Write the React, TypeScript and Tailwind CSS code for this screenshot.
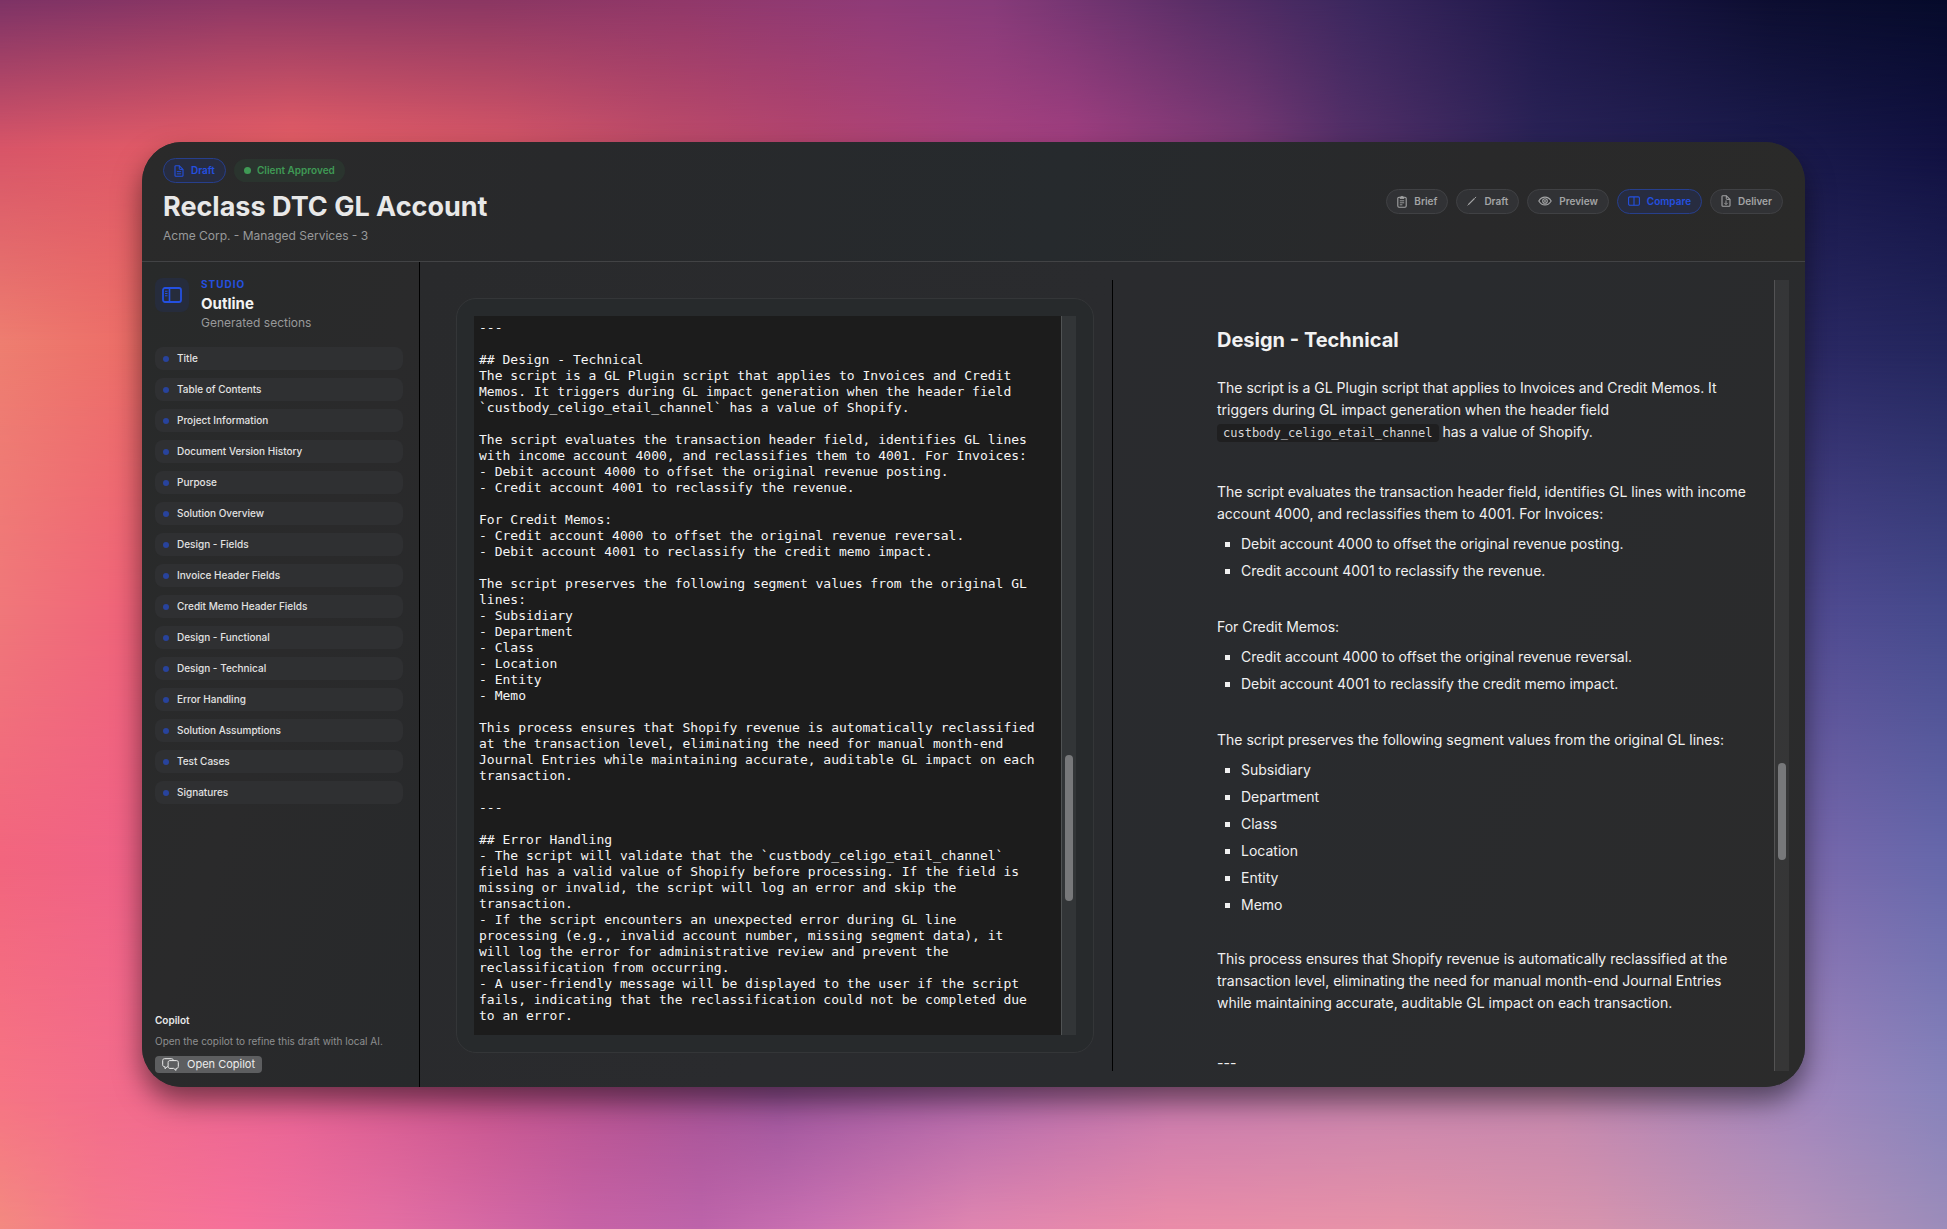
import React, { useState } from 'react';
import clsx from 'clsx';

type IconProps = { className?: string };

const DocIcon = ({ className }: IconProps) => (
  <svg className={className} width="10" height="12" viewBox="0 0 10 12" fill="none" stroke="currentColor">
    <path d="M1 1.6C1 1 1.3.7 1.9.7h3.4L9 4.4v6c0 .6-.3.9-.9.9H1.9c-.6 0-.9-.3-.9-.9z" strokeWidth="1.1" />
    <path d="M5.3.8v2.9c0 .5.2.7.7.7h2.9" strokeWidth="1" />
    <path d="M2.8 6.6h4.4M2.8 8.8h4.4" strokeWidth=".9" />
  </svg>
);

const ClipboardIcon = ({ className }: IconProps) => (
  <svg className={className} width="10" height="13" viewBox="0 0 10 13" fill="none" stroke="currentColor">
    <rect x=".8" y="2.2" width="8.4" height="10" rx="1.2" strokeWidth="1.1" />
    <path d="M3 3.4V2.2h1.1a.9.9 0 0 1 1.8 0H7v1.2z" fill="currentColor" strokeWidth=".8" />
    <path d="M2.8 5.8h4.4M2.8 7.8h4.4M2.8 9.8h2.6" strokeWidth=".9" />
  </svg>
);

const PencilIcon = ({ className }: IconProps) => (
  <svg className={className} width="10" height="10" viewBox="0 0 10 10" fill="none" stroke="currentColor">
    <path d="M1.6 8.4 7.6 2.4" strokeWidth="1.3" />
    <path d="m8.1 1.9.7-.7M.9 9.1l.7-.7" strokeWidth="1" strokeLinecap="round" />
  </svg>
);

const EyeIcon = ({ className }: IconProps) => (
  <svg className={className} width="14" height="10" viewBox="0 0 14 10" fill="none" stroke="currentColor">
    <path d="M.8 5C2.2 2.6 4.4 1.1 7 1.1S11.8 2.6 13.2 5C11.8 7.4 9.6 8.9 7 8.9S2.2 7.4.8 5z" strokeWidth="1.1" />
    <circle cx="7" cy="5" r="2.3" strokeWidth="1.1" />
    <circle cx="7" cy="5" r=".9" fill="currentColor" stroke="none" />
  </svg>
);

const SplitIcon = ({ className }: IconProps) => (
  <svg className={className} width="12" height="10" viewBox="0 0 12 10" fill="none" stroke="currentColor">
    <rect x=".6" y=".9" width="10.8" height="8.4" rx="1.2" strokeWidth="1.1" />
    <path d="M6 1v8.2" strokeWidth="1.1" />
  </svg>
);

const DeliverIcon = ({ className }: IconProps) => (
  <svg className={className} width="10" height="12" viewBox="0 0 10 12" fill="none" stroke="currentColor">
    <path d="M1 1.6C1 1 1.3.7 1.9.7h3.4L9 4.4v6c0 .6-.3.9-.9.9H1.9c-.6 0-.9-.3-.9-.9z" strokeWidth="1.1" />
    <path d="M5.3.8v2.9c0 .5.2.7.7.7h2.9" strokeWidth="1" />
    <path d="M5 5.4v4M3.3 7.9 5 9.6l1.7-1.7" strokeWidth=".9" />
  </svg>
);

const SidebarIcon = ({ className }: IconProps) => (
  <svg className={className} width="20" height="16" viewBox="0 0 20 16" fill="none" stroke="currentColor">
    <rect x="1" y="1" width="18" height="14" rx="2" strokeWidth="1.8" />
    <path d="M7.5 1v14" strokeWidth="1.6" />
    <path d="M3 4.2h2.5M3 6.5h2.5M3 8.8h2.5" strokeWidth="1.1" />
  </svg>
);

const BubblesIcon = ({ className }: IconProps) => (
  <svg className={className} width="17" height="13" viewBox="0 0 17 13" fill="none" stroke="currentColor" strokeLinejoin="round">
    <path d="M6 8.7h-.8l-2.2 2v-2h-.4C1.4 8.7.7 8 .7 6.8V2.6C.7 1.4 1.4.7 2.6.7h6.8c1.2 0 1.900.7 1.900 1.900" />
    <path d="M8 2.6h6.4c1.2 0 1.9.7 1.9 1.9v4c0 1.2-.7 1.9-1.9 1.9H14v2l-2.3-2H8c-1.2 0-1.9-.7-1.9-1.9v-4c0-1.2.7-1.9 1.9-1.9z" />
  </svg>
);

const MODES = [
  { id: 'brief', label: 'Brief', icon: ClipboardIcon },
  { id: 'draft', label: 'Draft', icon: PencilIcon },
  { id: 'preview', label: 'Preview', icon: EyeIcon },
  { id: 'compare', label: 'Compare', icon: SplitIcon },
  { id: 'deliver', label: 'Deliver', icon: DeliverIcon },
];

const SECTIONS = [
  'Title',
  'Table of Contents',
  'Project Information',
  'Document Version History',
  'Purpose',
  'Solution Overview',
  'Design - Fields',
  'Invoice Header Fields',
  'Credit Memo Header Fields',
  'Design - Functional',
  'Design - Technical',
  'Error Handling',
  'Solution Assumptions',
  'Test Cases',
  'Signatures',
];

const SOURCE = `---

## Design - Technical
The script is a GL Plugin script that applies to Invoices and Credit
Memos. It triggers during GL impact generation when the header field
\`custbody_celigo_etail_channel\` has a value of Shopify.

The script evaluates the transaction header field, identifies GL lines
with income account 4000, and reclassifies them to 4001. For Invoices:
- Debit account 4000 to offset the original revenue posting.
- Credit account 4001 to reclassify the revenue.

For Credit Memos:
- Credit account 4000 to offset the original revenue reversal.
- Debit account 4001 to reclassify the credit memo impact.

The script preserves the following segment values from the original GL
lines:
- Subsidiary
- Department
- Class
- Location
- Entity
- Memo

This process ensures that Shopify revenue is automatically reclassified
at the transaction level, eliminating the need for manual month-end
Journal Entries while maintaining accurate, auditable GL impact on each
transaction.

---

## Error Handling
- The script will validate that the \`custbody_celigo_etail_channel\`
field has a valid value of Shopify before processing. If the field is
missing or invalid, the script will log an error and skip the
transaction.
- If the script encounters an unexpected error during GL line
processing (e.g., invalid account number, missing segment data), it
will log the error for administrative review and prevent the
reclassification from occurring.
- A user-friendly message will be displayed to the user if the script
fails, indicating that the reclassification could not be completed due
to an error.`;

// Each layer fades in over the one before, so the colours blend down the page
const Wallpaper = () => (
  <div className="absolute inset-0 -z-10" aria-hidden="true">
    <div className="absolute inset-0 bg-[linear-gradient(to_right,#7d3366,#8d3765_12%,#8b3763_25%,#91386a_35%,#8f3b78_45%,#873b7a_51%,#5c2f68_61%,#3a275e_70%,#1d1748_80%,#0d0e31_91%,#060b2b)]" />
    <div className="absolute inset-0 bg-[linear-gradient(to_right,#d85568,#e85f66_15%,#d65667_26%,#c04c69_34%,#b5456e_41%,#a8427d_50%,#a23f80_55%,#793974_64%,#563069_69%,#2a2357_79%,#1b1b4c_90%,#111141)] [mask-image:linear-gradient(to_bottom,transparent,black_12%)]" />
    <div className="absolute inset-0 bg-[linear-gradient(to_right,#ee7e70,#ec6a66_8%,#a23f80_50%,#2a2863_93%,#22255c)] [mask-image:linear-gradient(to_bottom,transparent_12%,black_28%)]" />
    <div className="absolute inset-0 bg-[linear-gradient(to_right,#f0777a,#f0627a_7%,#a23f80_50%,#514b92_93%,#454a8c)] [mask-image:linear-gradient(to_bottom,transparent_28%,black_50%)]" />
    <div className="absolute inset-0 bg-[linear-gradient(to_right,#f2657e,#f06288_7%,#a24f90_50%,#7868ac_93%,#6668ab)] [mask-image:linear-gradient(to_bottom,transparent_50%,black_70%)]" />
    <div className="absolute inset-0 bg-[linear-gradient(to_right,#f67484,#f26b8d_7%,#e86394_15%,#c8558e_25%,#b05292_33%,#9c549b_40%,#b168ab_50%,#c87aaf_60%,#c884ae_70%,#c487ae_80%,#9f86bd_93%,#8783bb)] [mask-image:linear-gradient(to_bottom,transparent_70%,black_89%)]" />
    <div className="absolute inset-0 bg-[linear-gradient(to_right,#f38a80,#f5788c_5%,#f6709a_12%,#e46fa3_20%,#c763a6_30%,#bd64aa_36%,#cb72b2_42%,#e086b0_50%,#ea8ca8_60%,#e693a8_72%,#d694ae_82%,#b893ba_92%,#9b8cba)] [mask-image:linear-gradient(to_bottom,transparent_89%,black)]" />
  </div>
);

interface ScrollTrackProps {
  thumbClassName: string;
}

const ScrollTrack: React.FC<ScrollTrackProps> = ({ thumbClassName }) => (
  <div className="relative w-[15px] shrink-0 border-l border-white/15 bg-white/5">
    <div className={clsx('absolute left-[3px] w-2 rounded-full bg-[#77787a]', thumbClassName)} />
  </div>
);

const Bullets = ({ items }: { items: string[] }) => (
  <ul className="mt-2 flex flex-col gap-[5px] pl-2">
    {items.map((item) => (
      <li key={item} className="flex items-center gap-[11px]">
        <span className="size-[5px] bg-[#f0f0f0]" />
        {item}
      </li>
    ))}
  </ul>
);

const Header = () => {
  const [mode, setMode] = useState('compare');

  return (
    <header className="flex items-center justify-between border-b border-[#424345] bg-[linear-gradient(100deg,#2a2a2a,#28292b_25%,#262a2d_55%,#29292a_80%,#2a2a29)] pt-4 pr-[22px] pb-[17px] pl-[21px]">
      <div>
        <div className="flex items-center gap-2">
          <span className="flex h-[25px] items-center gap-[7px] rounded-full border border-[#273f8c] bg-[#272c40] px-[10px] text-[10px] font-semibold text-[#2450e0]">
            <DocIcon />
            Draft
          </span>
          <span className="flex h-[23px] items-center gap-[6px] rounded-full bg-[#2a342e] px-[10px] text-[10px] font-semibold text-[#3f9a55]">
            <span className="size-[7px] rounded-full bg-[#3f9a55]" />
            Client Approved
          </span>
        </div>
        <h1 className="mt-[9px] text-[27px] leading-[30px] font-bold text-[#e8e8e8]">Reclass DTC GL Account</h1>
        <p className="mt-[6px] text-xs leading-4 text-[#98999a]">Acme Corp. - Managed Services - 3</p>
      </div>

      <nav className="flex items-center gap-2">
        {MODES.map(({ id, label, icon: Icon }) => (
          <button
            key={id}
            type="button"
            onClick={() => setMode(id)}
            aria-pressed={mode === id}
            className={clsx(
              'flex h-[25px] items-center gap-[7px] rounded-full border px-[10px] text-[10px] font-semibold',
              mode === id
                ? 'border-[#273f8c] bg-[#272c40] text-[#2450e0]'
                : 'border-[#404144] bg-[#313235] text-[#a3a4a5]',
            )}
          >
            <Icon />
            {label}
          </button>
        ))}
      </nav>
    </header>
  );
};

const Sidebar = () => (
  <aside className="flex w-[278px] shrink-0 flex-col border-r border-black bg-[linear-gradient(110deg,#282a2a,#2a2a2b_50%,#27292b)] pt-4 pr-4 pb-[14px] pl-[13px]">
    <div className="flex gap-3">
      <div className="flex size-[34px] items-center justify-center rounded-lg bg-[#262c3c] text-[#2450e0]">
        <SidebarIcon />
      </div>
      <div>
        <p className="text-[10px] leading-3 font-bold tracking-widest text-[#2450e0]">STUDIO</p>
        <h2 className="mt-1 text-[15px] leading-5 font-bold text-[#f2f2f2]">Outline</h2>
        <p className="mt-px text-xs leading-4 text-[#98999a]">Generated sections</p>
      </div>
    </div>

    <ul className="mt-4 flex flex-col gap-2">
      {SECTIONS.map((section) => (
        <li key={section}>
          <button
            type="button"
            className="flex h-[23px] w-full items-center gap-2 rounded-lg bg-[#2f3032] px-2 text-left text-[10px] font-medium text-[#e2e2e2]"
          >
            <span className="size-[6px] rounded-full bg-[#28439c]" />
            {section}
          </button>
        </li>
      ))}
    </ul>

    <div className="mt-auto">
      <h3 className="text-[10px] leading-4 font-semibold text-[#e8e8e8]">Copilot</h3>
      <p className="mt-[5px] text-[10px] leading-4 whitespace-nowrap text-[#8e8f90]">
        Open the copilot to refine this draft with local AI.
      </p>
      <button
        type="button"
        className="mt-[7px] flex h-[17px] items-center gap-2 rounded bg-[#5d5e60] px-[7px] text-[11px] text-[#ececec]"
      >
        <BubblesIcon />
        Open Copilot
      </button>
    </div>
  </aside>
);

const Editor = () => {
  const [source, setSource] = useState(SOURCE);

  return (
    <section className="flex min-h-0 border-r border-black py-[18px] pr-[18px] pl-[19px]">
      <div className="flex flex-1 rounded-[20px] border border-[#343638] bg-[#272a2c] p-[17px]">
        <textarea
          value={source}
          onChange={(e) => setSource(e.target.value)}
          aria-label="Markdown source"
          wrap="off"
          spellCheck={false}
          className="min-w-0 flex-1 resize-none overflow-hidden bg-[#1c1c1c] pt-1 pl-[5px] font-['DejaVu_Sans_Mono',monospace] text-[13px] leading-4 text-[#f5f5f5] outline-none"
        />
        <ScrollTrack thumbClassName="top-[61%] h-[146px]" />
      </div>
    </section>
  );
};

const Preview = () => (
  <section className="flex min-h-0">
    <article className="flex-1 pt-[46px] pr-5 pl-[104px] text-[14px] leading-[22px] text-[#f0f0f0]">
      <h2 className="text-[20px] leading-7 font-bold text-[#f2f2f2]">Design - Technical</h2>
      <p className="mt-[23px]">
        The script is a GL Plugin script that applies to Invoices and Credit Memos. It triggers during GL impact
        generation when the header field{' '}
        <code className="rounded bg-[#1f1f20] px-[6px] py-[2px] font-['DejaVu_Sans_Mono',monospace] text-xs text-[#d8d8d8]">
          custbody_celigo_etail_channel
        </code>{' '}
        has a value of Shopify.
      </p>

      <p className="mt-[38px]">
        The script evaluates the transaction header field, identifies GL lines with income account 4000, and
        reclassifies them to 4001. For Invoices:
      </p>
      <Bullets
        items={[
          'Debit account 4000 to offset the original revenue posting.',
          'Credit account 4001 to reclassify the revenue.',
        ]}
      />

      <p className="mt-[34px]">For Credit Memos:</p>
      <Bullets
        items={[
          'Credit account 4000 to offset the original revenue reversal.',
          'Debit account 4001 to reclassify the credit memo impact.',
        ]}
      />

      <p className="mt-[34px]">The script preserves the following segment values from the original GL lines:</p>
      <Bullets items={['Subsidiary', 'Department', 'Class', 'Location', 'Entity', 'Memo']} />

      <p className="mt-8">
        This process ensures that Shopify revenue is automatically reclassified at the transaction level, eliminating
        the need for manual month-end Journal Entries while maintaining accurate, auditable GL impact on each
        transaction.
      </p>

      <p className="mt-[38px]">---</p>
    </article>
    <ScrollTrack thumbClassName="top-[61%] h-[97px]" />
  </section>
);

export default function App() {
  return (
    <div className="relative isolate flex h-screen min-h-[1100px] flex-col p-[142px] font-['Inter',sans-serif]">
      <Wallpaper />
      <div className="flex min-h-0 flex-1 flex-col overflow-hidden rounded-[40px] bg-[#2a2b2d] shadow-[0_14px_28px_rgba(0,0,0,0.5)]">
        <Header />
        <div className="flex min-h-0 flex-1">
          <Sidebar />
          <main className="grid min-w-0 flex-1 grid-cols-2 grid-rows-1 bg-[linear-gradient(115deg,#292a2c,#2a2b2e_40%,#292b2e_60%,#2b2b2b)] pt-[18px] pr-4 pb-4 pl-[17px]">
            <Editor />
            <Preview />
          </main>
        </div>
      </div>
    </div>
  );
}
